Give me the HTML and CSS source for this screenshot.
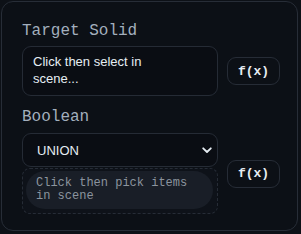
FILE: index.html
```html
<!DOCTYPE html>
<html>
<head>
<meta charset="utf-8">
<link rel="stylesheet" href="styles.css">
</head>
<body>
<div class="panel">
  <div class="field">
    <div class="label">Target Solid</div>
    <div class="row">
      <div class="main">
        <div class="picker">Click then select in scene...</div>
      </div>
      <button class="fx">f(x)</button>
    </div>
  </div>
  <div class="field second">
    <div class="label">Boolean</div>
    <div class="row">
      <div class="main">
        <div class="select">
          <span>UNION</span>
          <svg class="chev" width="10" height="7" viewBox="0 0 10 7"><path d="M1.2 1.3 L5 5 L8.8 1.3" fill="none" stroke="#e6edf3" stroke-width="1.8" stroke-linecap="round" stroke-linejoin="round"/></svg>
        </div>
        <div class="drop">
          <div class="pill">Click then pick items in scene</div>
        </div>
      </div>
      <button class="fx">f(x)</button>
    </div>
  </div>
</div>
</body>
</html>
```
FILE: styles.css
```css
html, body {
  margin: 0;
  padding: 0;
  background: #0d1117;
}
body {
  width: 301px;
  height: 234px;
  overflow: hidden;
}
.panel {
  margin: 1px;
  width: 297px;
  height: 230px;
  box-sizing: border-box;
  border: 1px solid #272d37;
  border-radius: 12px;
  background: #0c1016;
  padding: 19px 17px 0 20px;
}
.label {
  font-family: "Liberation Mono", monospace;
  font-size: 16px;
  line-height: 20px;
  color: #a3afbd;
  margin-bottom: 5px;
}
.second {
  margin-top: 11px;
}
.second .label {
  margin-bottom: 6px;
}
.row {
  display: flex;
  align-items: center;
  gap: 9px;
}
.main {
  flex: 0 0 196px;
  display: flex;
  flex-direction: column;
  gap: 1px;
}
.picker {
  border: 1px solid #252b35;
  border-radius: 9px;
  background: #0a0d13;
  padding: 6px 40px 8px 10px;
  font-family: "Liberation Sans", Arial, sans-serif;
  font-size: 13px;
  line-height: 17px;
  color: #e6edf3;
}
.fx {
  width: 53px;
  height: 28px;
  box-sizing: border-box;
  border: 1px solid #262c36;
  border-radius: 9px;
  background: #0c1016;
  color: #e6edf3;
  font-family: "Liberation Mono", monospace;
  font-weight: bold;
  font-size: 13px;
  padding: 0;
  display: flex;
  align-items: center;
  justify-content: center;
}
.select {
  height: 34px;
  box-sizing: border-box;
  border: 1px solid #252b35;
  border-radius: 9px;
  background: #0a0d13;
  padding: 0 5px 0 14px;
  display: flex;
  align-items: center;
  justify-content: space-between;
  font-family: "Liberation Sans", Arial, sans-serif;
  font-size: 13px;
  color: #e6edf3;
}
.chev {
  display: block;
}
.drop {
  border: 1px dashed #262c36;
  border-radius: 8px;
  background: #0e1219;
  padding: 2px 4px 4px 3px;
}
.pill {
  background: #191e27;
  border-radius: 19px;
  padding: 6px 10px 6px 10px;
  font-family: "Liberation Mono", monospace;
  font-size: 12px;
  line-height: 13px;
  color: #8b949e;
}
```
